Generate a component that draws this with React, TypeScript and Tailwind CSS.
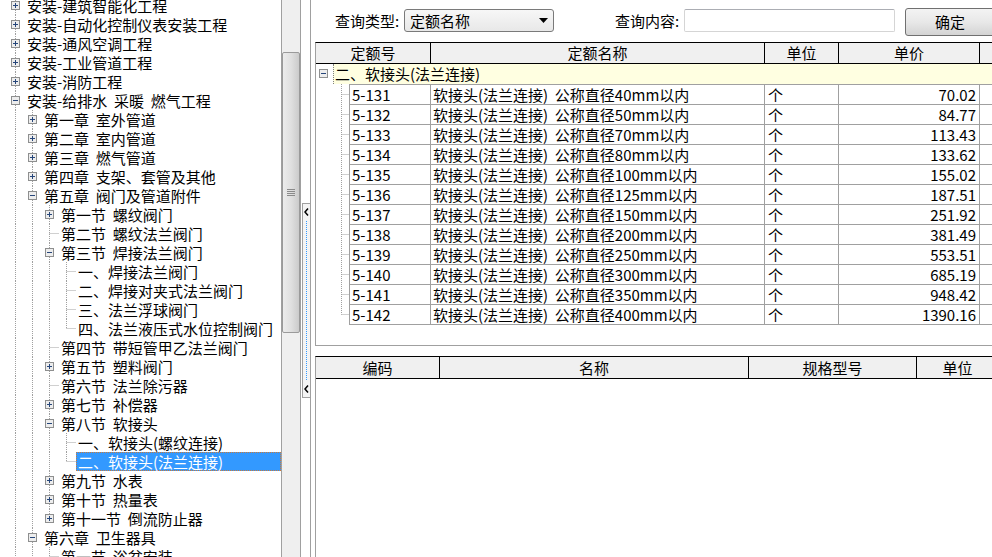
import React from 'react';

type TreeNode = { label: string; level: number; kids?: 'open' | 'closed'; selected?: boolean };

// tree rows; the last few sit below the fold so the guide lines keep running
const TREE: TreeNode[] = [
  { label: '安装-建筑智能化工程', level: 0, kids: 'closed' },
  { label: '安装-自动化控制仪表安装工程', level: 0, kids: 'closed' },
  { label: '安装-通风空调工程', level: 0, kids: 'closed' },
  { label: '安装-工业管道工程', level: 0, kids: 'closed' },
  { label: '安装-消防工程', level: 0, kids: 'closed' },
  { label: '安装-给排水  采暖  燃气工程', level: 0, kids: 'open' },
  { label: '第一章  室外管道', level: 1, kids: 'closed' },
  { label: '第二章  室内管道', level: 1, kids: 'closed' },
  { label: '第三章  燃气管道', level: 1, kids: 'closed' },
  { label: '第四章  支架、套管及其他', level: 1, kids: 'closed' },
  { label: '第五章  阀门及管道附件', level: 1, kids: 'open' },
  { label: '第一节  螺纹阀门', level: 2, kids: 'closed' },
  { label: '第二节  螺纹法兰阀门', level: 2 },
  { label: '第三节  焊接法兰阀门', level: 2, kids: 'open' },
  { label: '一、焊接法兰阀门', level: 3 },
  { label: '二、焊接对夹式法兰阀门', level: 3 },
  { label: '三、法兰浮球阀门', level: 3 },
  { label: '四、法兰液压式水位控制阀门', level: 3 },
  { label: '第四节  带短管甲乙法兰阀门', level: 2 },
  { label: '第五节  塑料阀门', level: 2, kids: 'closed' },
  { label: '第六节  法兰除污器', level: 2 },
  { label: '第七节  补偿器', level: 2, kids: 'closed' },
  { label: '第八节  软接头', level: 2, kids: 'open' },
  { label: '一、软接头(螺纹连接)', level: 3 },
  { label: '二、软接头(法兰连接)', level: 3, selected: true },
  { label: '第九节  水表', level: 2, kids: 'closed' },
  { label: '第十节  热量表', level: 2, kids: 'closed' },
  { label: '第十一节  倒流防止器', level: 2, kids: 'closed' },
  { label: '第六章  卫生器具', level: 1, kids: 'open' },
  { label: '第一节  浴盆安装', level: 2 },
  { label: '第二节  洗脸盆、洗手盆安装', level: 2 },
  { label: '第七章  供暖器具', level: 1, kids: 'closed' },
  { label: '安装-刷油、防腐蚀、绝热工程', level: 0, kids: 'closed' },
];

const RATES: [string, string, string][] = [
  ['5-131', '40', '70.02'],
  ['5-132', '50', '84.77'],
  ['5-133', '70', '113.43'],
  ['5-134', '80', '133.62'],
  ['5-135', '100', '155.02'],
  ['5-136', '125', '187.51'],
  ['5-137', '150', '251.92'],
  ['5-138', '200', '381.49'],
  ['5-139', '250', '553.51'],
  ['5-140', '300', '685.19'],
  ['5-141', '350', '948.42'],
  ['5-142', '400', '1390.16'],
];

const LINE = '#a0a0a0';

function hasNext(i: number, level: number) {
  for (let j = i + 1; j < TREE.length; j++) {
    if (TREE[j].level < level) return false;
    if (TREE[j].level === level) return true;
  }
  return false;
}

function ancestorAt(i: number, level: number) {
  for (let j = i - 1; j >= 0; j--) if (TREE[j].level === level) return j;
  return -1;
}

function ExpandBox({ cx, cy, open }: { cx: number; cy: number; open: boolean }) {
  return (
    <g>
      <rect x={cx - 4} y={cy - 4} width={8} height={8} fill="#ededed" stroke="#8e8f8f" />
      <line x1={cx - 2.5} x2={cx + 2.5} y1={cy} y2={cy} stroke="#26467a" />
      {!open && <line x1={cx} x2={cx} y1={cy - 2.5} y2={cy + 2.5} stroke="#26467a" />}
    </g>
  );
}

function TreeRow({ node, idx }: { node: TreeNode; idx: number }) {
  const L = node.level;
  const w = 25 + 17 * L;
  const xc = (l: number) => 15.5 + 17 * l;
  const guides: React.ReactNode[] = [];
  for (let l = 0; l < L; l++) {
    const a = ancestorAt(idx, l);
    if (a >= 0 && hasNext(a, l)) {
      guides.push(<line key={l} x1={xc(l)} x2={xc(l)} y1={0} y2={19} stroke={LINE} strokeDasharray="1 1" />);
    }
  }
  const next = hasNext(idx, L);
  return (
    <div className="flex h-[19px]">
      <svg width={w} height={19} className="shrink-0">
        {guides}
        <line x1={xc(L)} x2={xc(L)} y1={0} y2={next ? 19 : 9.5} stroke={LINE} strokeDasharray="1 1" />
        {node.kids ? (
          <ExpandBox cx={xc(L)} cy={9.5} open={node.kids === 'open'} />
        ) : (
          <line x1={xc(L)} x2={w} y1={9.5} y2={9.5} stroke={LINE} strokeDasharray="1 1" />
        )}
      </svg>
      <span
        className={`h-[19px] flex-1 whitespace-pre border border-dotted px-px leading-[17px] ${
          node.selected ? 'border-[#c97a3a] bg-[#3399ff] text-white' : 'border-transparent'
        }`}
      >
        {node.label}
      </span>
    </div>
  );
}

function Chevron() {
  return (
    <svg width="6" height="8" className="mx-auto">
      <path d="M4 0.5 L1 4 L4 7.5" fill="none" stroke="#000" strokeWidth="1.5" />
    </svg>
  );
}

export default function App() {
  return (
    <div className="flex h-[557px] w-[992px] overflow-hidden bg-white font-['Noto_Sans_CJK_SC',sans-serif] text-[15px] text-black">
      {/* tree pane */}
      <div className="h-full w-[281px] shrink-0 overflow-hidden">
        <div className="-mt-[4px]">
          {TREE.map((n, i) => (
            <TreeRow key={i} node={n} idx={i} />
          ))}
        </div>
      </div>

      {/* tree scrollbar */}
      <div className="h-full w-[20px] shrink-0 border-x border-[#a0a0a0] bg-[#efefef]">
        <div className="mt-[52px] flex h-[281px] items-center justify-center rounded-[2px] border border-[#9a9a9a] bg-linear-to-r from-[#ececec] via-[#e0e0e0] to-[#cbcbcb]">
          <svg width="8" height="8">
            <path d="M0 0.5h8M0 2.5h8M0 4.5h8M0 6.5h8" stroke="#8a8a8a" />
          </svg>
        </div>
      </div>

      {/* splitter */}
      <div className="h-full w-[10px] shrink-0 border-r border-[#a0a0a0]">
        <div className="ml-px mt-[203px] flex h-[195px] w-[8px] flex-col items-center border-y border-l border-[#a0a0a0] bg-[#f4f4f4] py-[4px]">
          <Chevron />
          <div className="my-[5px] w-0 flex-1 border-l border-dotted border-[#3399ff]" />
          <Chevron />
        </div>
      </div>

      {/* right pane */}
      <div className="flex h-full flex-1 flex-col overflow-hidden">
        <div className="flex h-[42px] shrink-0 items-start">
          <div className="ml-[24px] mt-[9px] h-[23px] w-[69px] shrink-0 leading-[23px]">查询类型:</div>
          <div className="mt-[9px] flex h-[23px] w-[150px] shrink-0 items-center justify-between rounded-[3px] border border-[#7a7a7a] bg-linear-to-b from-[#f7f7f7] to-[#e8e8e8] pl-[5px] pr-[5px] leading-[21px]">
            <span>定额名称</span>
            <svg width="9" height="5">
              <path d="M0 0h9L4.5 5z" fill="#000" />
            </svg>
          </div>
          <div className="ml-[61px] mt-[9px] h-[23px] w-[69px] shrink-0 leading-[23px]">查询内容:</div>
          <div className="mt-[9px] h-[23px] w-[211px] shrink-0 rounded-[2px] border border-[#d5d5d5] border-t-[#abadb3] bg-white" />
          <button className="ml-[10px] mt-[8px] h-[28px] w-[90px] shrink-0 rounded-[3px] border border-[#707070] bg-linear-to-b from-[#f3f3f3] via-[#e8e8e8] to-[#d4d4d4] leading-[26px]">
            确定
          </button>
        </div>

        <div className="flex flex-1 flex-col pl-[4px]">
          {/* rate table */}
          <div className="h-[304px] w-[720px] shrink-0 border-b border-l border-t border-[#a0a0a0] border-t-black">
            <div className="flex h-[21px] border-b border-black bg-[#f0f0f0] leading-[20px]">
              <div className="w-[115px] border-r border-black text-center">定额号</div>
              <div className="w-[334px] border-r border-black text-center">定额名称</div>
              <div className="w-[74px] border-r border-black text-center">单位</div>
              <div className="w-[141px] border-r border-black text-center">单价</div>
              <div className="flex-1" />
            </div>
            <div className="flex h-[20px]">
              <svg width="17" height="20" className="shrink-0">
                <ExpandBox cx={7.5} cy={9.5} open />
              </svg>
              <div className="flex-1 border-l border-dotted border-[#808080] bg-[#ffffe1] pl-px leading-[19px]">
                二、软接头(法兰连接)
              </div>
            </div>
            {RATES.map(([code, dia, price], i) => {
              const last = i === RATES.length - 1;
              return (
                <div key={code} className={`flex ${last ? 'h-[21px]' : 'h-[20px]'}`}>
                  <svg width="33" height="20" className="shrink-0">
                    <line x1={25.5} x2={25.5} y1={0} y2={last ? 10.5 : 20} stroke={LINE} strokeDasharray="1 1" />
                    <line x1={25.5} x2={33} y1={10.5} y2={10.5} stroke={LINE} strokeDasharray="1 1" />
                  </svg>
                  <div className={`flex flex-1 border-l border-t border-[#a0a0a0] leading-[19px] ${last ? 'border-b' : ''}`}>
                    <div className="w-[81px] border-r border-[#a0a0a0] pl-[2px]">{code}</div>
                    <div className="w-[334px] whitespace-pre border-r border-[#a0a0a0] pl-[2px]">
                      {`软接头(法兰连接)  公称直径${dia}mm以内`}
                    </div>
                    <div className="w-[74px] border-r border-[#a0a0a0] pl-[3px]">个</div>
                    <div className="w-[141px] border-r border-[#a0a0a0] pr-[3px] text-right">{price}</div>
                    <div className="flex-1" />
                  </div>
                </div>
              );
            })}
          </div>

          {/* material table */}
          <div className="mt-[10px] w-[720px] flex-1 border-l border-t border-[#a0a0a0] border-t-black">
            <div className="flex h-[22px] border-b border-black bg-[#f0f0f0] leading-[21px]">
              <div className="w-[124px] border-r border-black text-center">编码</div>
              <div className="w-[309px] border-r border-black text-center">名称</div>
              <div className="w-[168px] border-r border-black text-center">规格型号</div>
              <div className="w-[82px] border-r border-black text-center">单位</div>
              <div className="flex-1" />
            </div>
          </div>
        </div>
      </div>
    </div>
  );
}
